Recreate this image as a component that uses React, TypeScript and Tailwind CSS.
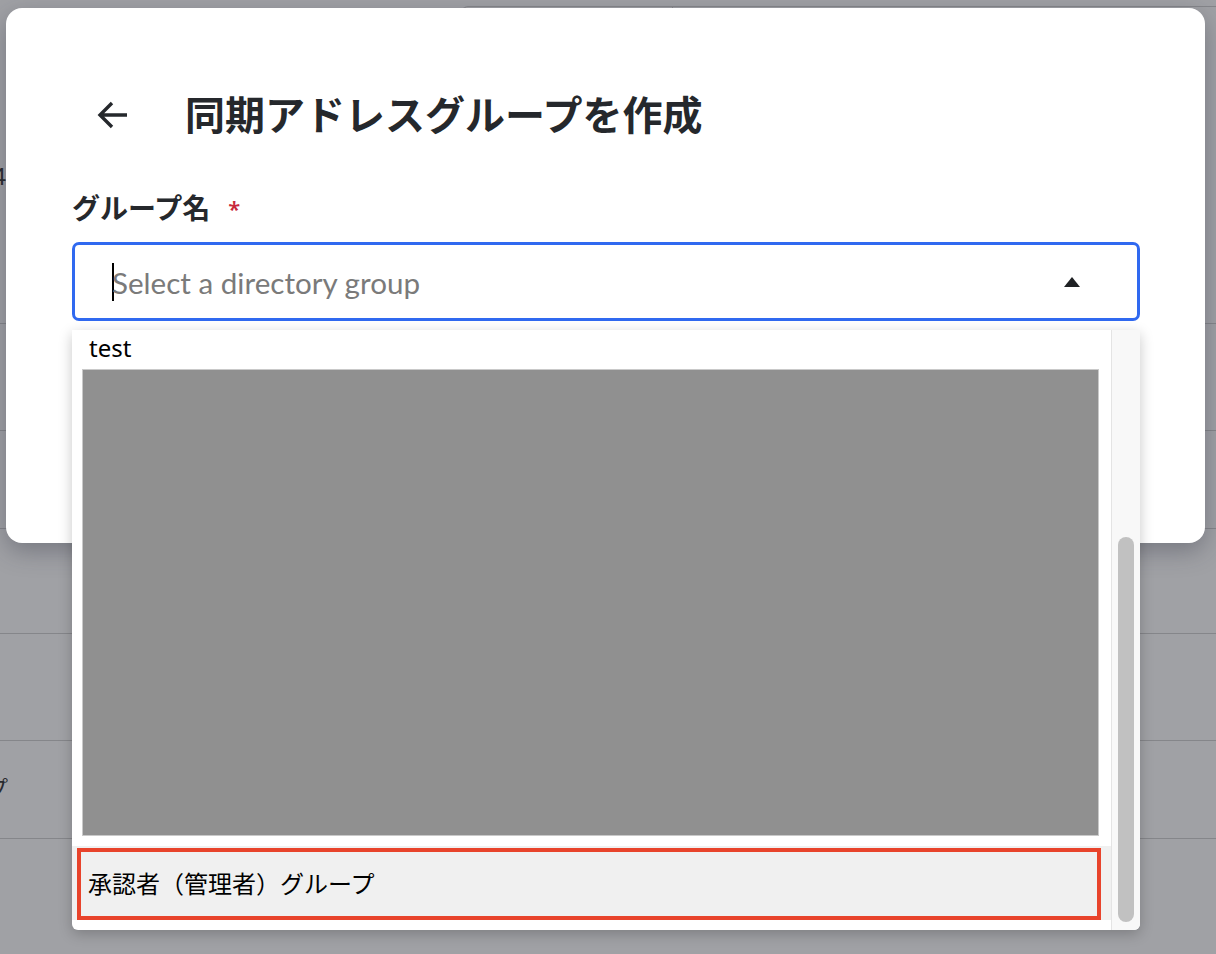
const rows = [107, 98, 105, 107, 98, 116];

function BackArrow() {
  return (
    <svg width="34" height="30" viewBox="0 0 34 30" fill="none" className="text-[#25282c]">
      <path d="M32 15H5M17 3L5 15l12 12" stroke="currentColor" strokeWidth="3.4" strokeLinejoin="miter" />
    </svg>
  );
}

function BackgroundPage() {
  return (
    <div className="flex flex-col">
      <div className="relative h-[323px]">
        <div className="ml-[462px] mt-[6px] flex h-[60px] rounded-tl-md border-l border-t border-[#85868a]">
          <div className="w-[210px] border-r border-[#85868a]" />
        </div>
        <div className="mt-[96px] flex w-[6px] justify-end overflow-hidden text-[24px] leading-[28px] text-[#2a2b2e]">
          <span className="shrink-0">4</span>
        </div>
      </div>
      {rows.map((h, i) => (
        <div key={i} className="border-t border-[#85868a]" style={{ height: h }}>
          {i === 4 && (
            <div className="mt-[32px] flex w-[8px] justify-end overflow-hidden text-[22px] leading-[28px] text-[#2a2b2e]">
              <span className="shrink-0">プ</span>
            </div>
          )}
        </div>
      ))}
    </div>
  );
}

function Dropdown() {
  return (
    <div className="absolute left-0 top-[calc(100%+9px)] flex h-[600px] w-full overflow-hidden rounded-b-md bg-white shadow-[0_4px_14px_rgba(0,0,0,0.22)]">
      <div className="flex flex-1 flex-col">
        <div className="flex h-[39px] items-center pb-[4px] pl-[17px] text-[24px] leading-[28px] text-black">test</div>
        <div className="ml-[10px] h-[467px] w-[1017px] border border-[#c9c9c9] bg-[#909090]" />
        <div className="mt-[10px] h-[74px] bg-[#f0f0f0] pt-[2px]">
          <div className="ml-[5px] flex h-[72px] w-[1024px] items-center border-4 border-[#e8432b] pl-[7px] text-[24px] text-black">
            承認者（管理者）グループ
          </div>
        </div>
      </div>
      <div className="w-[29px] border-l border-[#e4e4e4] bg-[#f8f8f8]">
        <div className="ml-[6px] mt-[207px] h-[385px] w-[16px] rounded-full bg-[#c1c1c1]" />
      </div>
    </div>
  );
}

export default function App() {
  return (
    <div className="relative h-[954px] w-[1216px] overflow-hidden bg-[#a0a1a5] font-['Noto_Sans','Noto_Sans_CJK_JP',sans-serif]">
      <BackgroundPage />

      <div className="absolute left-[6px] top-[8px] h-[535px] w-[1199px] rounded-[16px] bg-white pl-[66px] pr-[65px] pt-[79px] shadow-[0_8px_24px_rgba(40,42,60,0.35)]">
        <div className="flex h-[56px] items-center">
          <div className="ml-[23px]">
            <BackArrow />
          </div>
          <h1 className="ml-[56px] text-[40px] font-bold leading-[56px] text-[#25282c]">
            同期アドレスグループを作成
          </h1>
        </div>

        <div className="mt-[47px] flex h-[36px] items-center text-[28px] font-semibold text-[#25282c]">
          グループ名
          <span className="ml-[18px] text-[22px] text-[#c8283c]">*</span>
        </div>

        <div className="relative mt-[16px]">
          <div className="flex h-[79px] items-center rounded-[7px] border-[3px] border-[#3069f0] bg-white pl-[37px] pr-[57px]">
            <div className="mr-[-2px] h-[38px] w-[2px] bg-black" />
            <span className="mt-[3px] flex-1 font-['Lato',sans-serif] text-[29.6px] text-[#7a7a7a]">
              Select a directory group
            </span>
            <svg width="16" height="10" viewBox="0 0 16 10" className="text-[#1f2124]">
              <path d="M8 0L16 10H0Z" fill="currentColor" />
            </svg>
          </div>
          <Dropdown />
        </div>
      </div>
    </div>
  );
}
